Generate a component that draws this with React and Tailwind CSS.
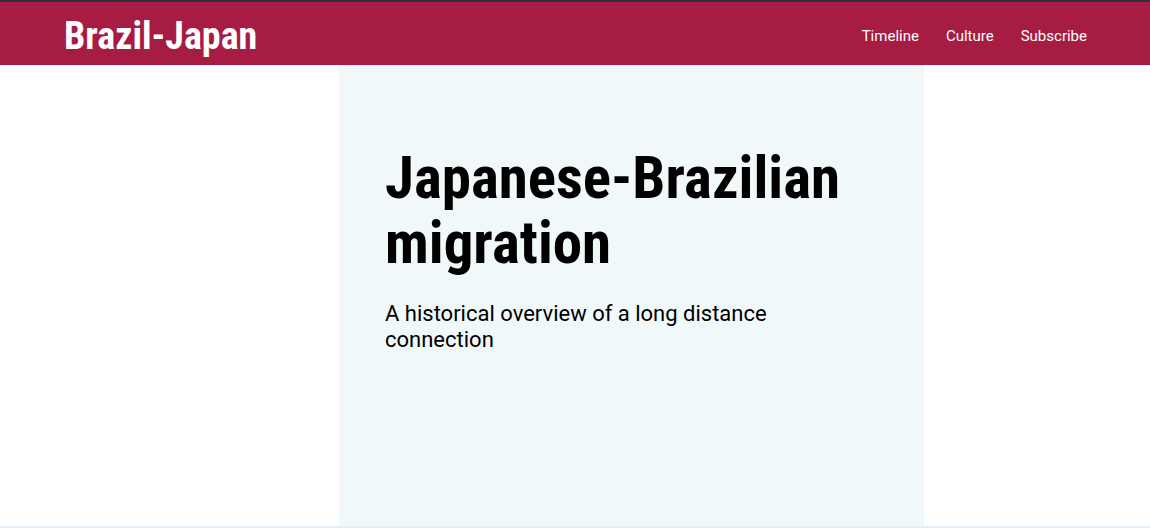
export default function App() {
  return (
    <div className="w-full min-h-[528px] flex flex-col bg-white font-['Roboto',sans-serif]">
      <div className="h-[2px] bg-[#2f2f35]" />
      <header className="h-[63px] bg-[#a61c42] flex items-center justify-between pl-16 pr-[63px] pt-[5px]">
        <div className="text-white font-bold text-[38px] leading-none font-['Roboto_Condensed','Roboto',sans-serif]">
          Brazil-Japan
        </div>
        <nav className="flex items-center gap-[27px] text-white text-[15px] pt-[1px]">
          <a>Timeline</a>
          <a>Culture</a>
          <a>Subscribe</a>
        </nav>
      </header>
      <main className="grid grid-cols-[339px_585px_1fr] h-[461px]">
        <div />
        <section className="bg-[#f0f8f9] pl-[46px] pr-[40px] pt-[80px]">
          <h1 className="text-black font-bold text-[59px] leading-[65px] font-['Roboto_Condensed','Roboto',sans-serif]">
            Japanese-Brazilian migration
          </h1>
          <p className="mt-[26px] text-black text-[22px] leading-[26px] max-w-[430px]">
            A historical overview of a long distance connection
          </p>
        </section>
        <div />
      </main>
      <div className="h-[2px] bg-[#e3eff8]" />
    </div>
  );
}
